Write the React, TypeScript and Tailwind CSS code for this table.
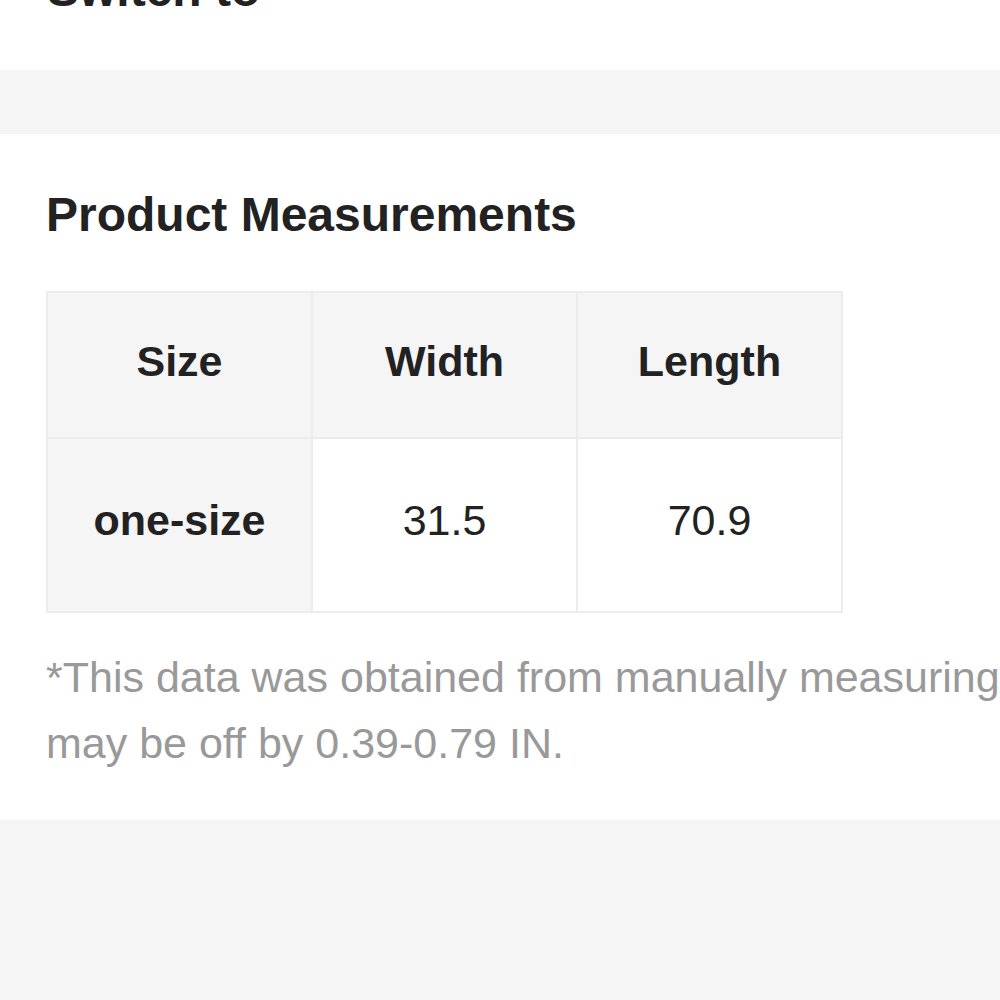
import React from 'react';

const rows = [{ size: 'one-size', width: '31.5', length: '70.9' }];

export default function App() {
  return (
    <div
      className="w-[1000px] h-[1000px] overflow-hidden bg-[#f5f5f5] text-[#222]"
      style={{ fontFamily: '"Liberation Sans", Arial, sans-serif' }}
    >
      {/* previous block, scrolled mostly out of view */}
      <div className="h-[70px] bg-white pl-[47px] overflow-hidden">
        <div className="mt-[-34px] text-[48px] leading-[48px] font-bold whitespace-nowrap">Switch to</div>
      </div>

      <div className="h-[64px]" />

      <section className="bg-white pl-[46px] pt-[57px] pb-[44px]">
        <h2 className="text-[48px] leading-[48px] font-bold whitespace-nowrap">Product Measurements</h2>

        <table className="mt-[52px] w-[797px] border-collapse table-fixed text-[43px]">
          <thead>
            <tr className="h-[146px] bg-[#f5f5f5]">
              <th className="border-2 border-[#ececec] pb-[8px] font-bold">Size</th>
              <th className="border-2 border-[#ececec] pb-[8px] font-bold">Width</th>
              <th className="border-2 border-[#ececec] pb-[8px] font-bold">Length</th>
            </tr>
          </thead>
          <tbody>
            {rows.map((r) => (
              <tr key={r.size} className="h-[174px]">
                <td className="border-2 border-[#ececec] bg-[#f5f5f5] pb-[10px] text-center font-bold">{r.size}</td>
                <td className="border-2 border-[#ececec] pb-[10px] text-center">{r.width}</td>
                <td className="border-2 border-[#ececec] pb-[10px] text-center">{r.length}</td>
              </tr>
            ))}
          </tbody>
        </table>

        <p className="mt-[31px] text-[43px] leading-[66px] text-[#999] whitespace-nowrap">
          *This data was obtained from manually measuring the product, it
          <br />
          may be off by 0.39-0.79 IN.
        </p>
      </section>
    </div>
  );
}
